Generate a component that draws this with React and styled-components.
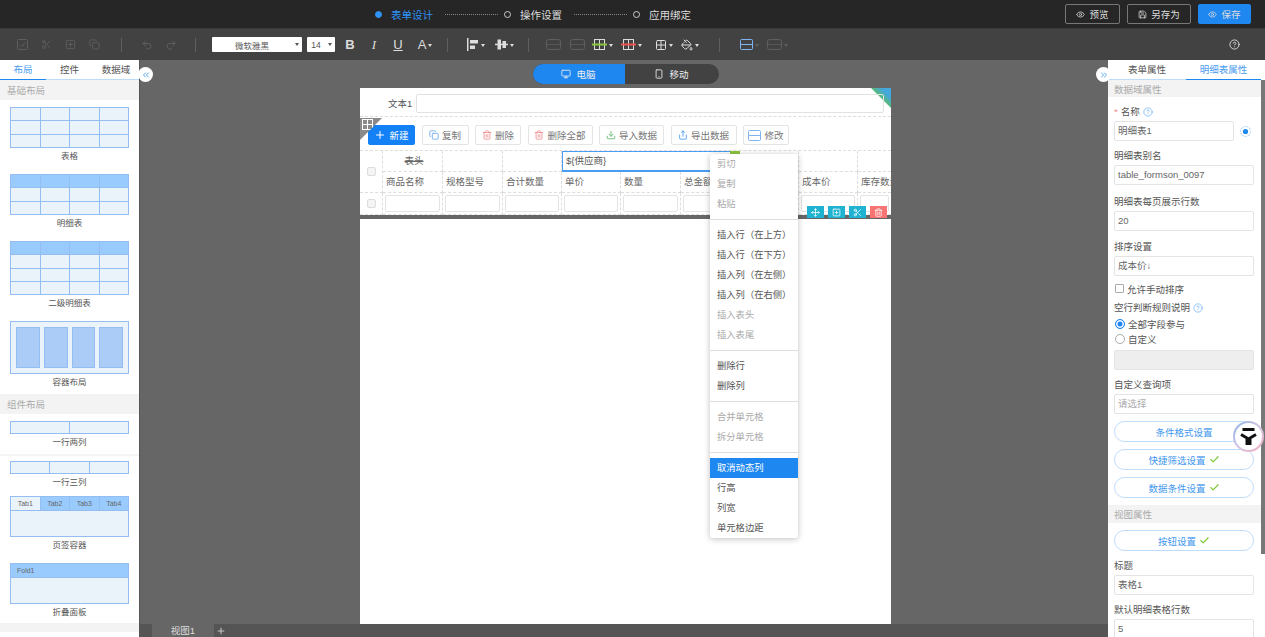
import React from "react"
import styled, { createGlobalStyle } from "styled-components"
import {
  Scissors, Undo2, Redo2, Monitor, Smartphone, CircleHelp, Eye, Save, ChevronsLeft, ChevronsRight,
  Plus, Check, Copy, Trash2, Upload, Share, Move, Grid2x2, PaintBucket, SquarePlus, Download,
} from "lucide-react"

const GlobalStyle = createGlobalStyle`
  html, body { margin: 0; padding: 0; height: 100%; }
  body {
    font-family: "Liberation Sans", "Noto Sans CJK SC", sans-serif;
    font-size: 9.5px;
    color: #555;
    overflow: hidden;
  }
  * { box-sizing: border-box; }
`

const Page = styled.div`
  width: 1265px;
  height: 637px;
  display: flex;
  flex-direction: column;
  position: relative;
  overflow: hidden;
  background: #666;
`

/* top bar */
const TopBar = styled.header`
  height: 29px;
  flex: none;
  background: #262626;
  border-bottom: 1px solid #3a3a3a;
  display: flex;
  align-items: center;
  padding-left: 375px;
`
const StepDot = styled.i`
  width: 7px;
  height: 7px;
  border-radius: 50%;
  flex: none;
  background: ${p => (p.$active ? "#2f93f5" : "transparent")};
  border: 1px solid ${p => (p.$active ? "#2f93f5" : "#ccc")};
`
const StepText = styled.span`
  font-size: 10.5px;
  margin-left: ${p => (p.$active ? "9px" : "9px")};
  color: ${p => (p.$active ? "#2f93f5" : "#ddd")};
  width: 43px;
  white-space: nowrap;
`
const StepLine = styled.i`
  width: 53px;
  margin: 0 6px 0 11px;
  border-top: 1px dotted #888;
`
const TopActions = styled.div`
  margin-left: auto;
  display: flex;
  gap: 7px;
  padding-right: 14px;
`
const TopButton = styled.button`
  height: 20px;
  width: ${p => p.$w}px;
  margin-left: ${p => p.$ml || 0}px;
  border-radius: 2px;
  border: 1px solid ${p => (p.$primary ? "#1e87f0" : "#777")};
  background: ${p => (p.$primary ? "#1e87f0" : "transparent")};
  color: #ddd;
  font: inherit;
  font-size: 9.5px;
  padding: 0;
  display: flex;
  align-items: center;
  justify-content: center;
  gap: 4px;
`

/* toolbar */
const ToolBar = styled.div`
  height: 31px;
  flex: none;
  background: #424242;
  display: flex;
  align-items: center;
  padding-left: 10px;
  color: #ddd;
`
const Tool = styled.span`
  width: ${p => p.$w || 24}px;
  margin-left: ${p => p.$ml || 0}px;
  flex: none;
  display: flex;
  align-items: center;
  justify-content: center;
  gap: 2px;
  color: ${p => (p.$off ? "#5e5e5e" : "#ddd")};
  font-family: ${p => (p.$serif ? '"Liberation Serif", serif' : "inherit")};
  font-size: 13px;
  font-weight: ${p => (p.$bold ? 700 : 400)};
  font-style: ${p => (p.$italic ? "italic" : "normal")};
  text-decoration: ${p => (p.$under ? "underline" : "none")};
`
const Caret = styled.i`
  width: 0;
  height: 0;
  border: 2px solid transparent;
  border-top: 3px solid ${p => (p.$off ? "#5e5e5e" : "#ddd")};
  margin-top: 3px;
`
const ToolDivider = styled.i`
  width: 1px;
  height: 14px;
  flex: none;
  background: #5f5f5f;
  margin: 0 ${p => p.$r}px 0 ${p => p.$l}px;
`
const ToolSelect = styled.div`
  width: ${p => p.$w}px;
  margin-left: ${p => p.$ml || 0}px;
  height: 15px;
  flex: none;
  background: #fff;
  border-radius: 1px;
  color: #555;
  font-size: 8.5px;
  display: flex;
  align-items: center;
  justify-content: center;
  position: relative;
  padding-right: 10px;
  & > i {
    position: absolute;
    right: 3px;
    top: 6px;
    border: 2px solid transparent;
    border-top: 3px solid #555;
  }
`

/* main area */
const Main = styled.div`
  flex: 1;
  min-height: 0;
  display: flex;
`
const SidePanel = styled.aside`
  flex: none;
  width: ${p => p.$w}px;
  background: #fff;
  overflow: hidden;
  display: flex;
  flex-direction: column;
`
const TabRow = styled.div`
  height: 20px;
  flex: none;
  display: flex;
  border-bottom: 1px solid #bcdcfb;
`
const PanelTab = styled.div`
  width: ${p => p.$w}px;
  height: 20px;
  flex: none;
  text-align: center;
  font-size: 9.5px;
  line-height: 19px;
  color: ${p => (p.$on ? "#4a9cf0" : "#555")};
  border-bottom: ${p => (p.$on ? "1px solid #1e87f0" : "0")};
`
const SectionHead = styled.div`
  height: ${p => p.$h || 20}px;
  flex: none;
  background: #f3f3f3;
  color: #aaa;
  font-size: 9.5px;
  padding-left: ${p => p.$pl || 7}px;
  display: flex;
  align-items: center;
  margin-top: ${p => p.$mt || 0}px;
`
const ThumbList = styled.div`
  padding: 7px 10px 0;
  display: flex;
  flex-direction: column;
`
const ThumbItem = styled.div`
  height: ${p => p.$h}px;
  flex: none;
`
const ThumbLabel = styled.div`
  text-align: center;
  font-size: 8.5px;
  line-height: 12px;
  margin-top: 2px;
  color: #555;
`
const ThumbGrid = styled.div`
  height: ${p => p.$h}px;
  display: grid;
  grid-template-columns: repeat(${p => p.$cols}, 1fr);
  border: 1px solid #94bdf2;
  background: #94bdf2;
  gap: 1px;
`
const ThumbCell = styled.div`
  background: ${p => (p.$head ? "#99cbff" : "#eaf2fa")};
  color: #666;
  font-size: 7px;
  padding-left: ${p => p.$pl || 0}px;
  display: flex;
  align-items: center;
  justify-content: ${p => (p.$pl ? "flex-start" : "center")};
  grid-column: ${p => (p.$span ? `span ${p.$span}` : "auto")};
  grid-row: ${p => (p.$tall ? "span 2" : "auto")};
`
const BoxThumb = styled.div`
  height: 53px;
  border: 1px solid #94bdf2;
  background: #eaf2fa;
  padding: 5px 5px;
  display: flex;
  gap: 4px;
  & > i {
    flex: 1;
    background: #aaccf7;
    border: 1px solid #94bdf2;
  }
`
const ThumbRule = styled.div`
  height: 2px;
  margin: 0 -10px;
  background: #f5f5f5;
`

/* center */
const Center = styled.main`
  flex: 1;
  min-width: 0;
  display: flex;
  flex-direction: column;
  position: relative;
  border-left: 1px solid #555;
`
const Stage = styled.div`
  flex: 1;
  min-height: 0;
  padding-top: 4px;
  display: flex;
  flex-direction: column;
  align-items: center;
  margin-left: 3px;
`
const DeviceSwitch = styled.div`
  width: 186px;
  height: 20px;
  flex: none;
  display: flex;
  border-radius: 10px;
  overflow: hidden;
  background: #424242;
`
const DeviceTab = styled.div`
  width: ${p => p.$w}px;
  flex: none;
  background: ${p => (p.$on ? "#1e87f0" : "transparent")};
  color: #eee;
  font-size: 9.5px;
  display: flex;
  align-items: center;
  justify-content: center;
  gap: 5px;
`
const Canvas = styled.div`
  width: 531px;
  flex: 1;
  margin-top: 4px;
  background: #fff;
  position: relative;
  overflow: hidden;
`
const TextRow = styled.div`
  height: 29px;
  display: flex;
  align-items: flex-start;
  padding: 6px 7px 0 28px;
  border-bottom: 1px dashed #ddd;
  position: relative;
`
const FieldName = styled.span`
  width: 28px;
  line-height: 19px;
  flex: none;
`
const TextBox = styled.div`
  flex: 1;
  height: 19px;
  border: 1px solid #e2e2e2;
  border-radius: 2px;
`
const ColorCorner = styled.div`
  position: absolute;
  right: 0;
  top: 0;
  width: 20px;
  height: 20px;
  clip-path: polygon(0 0, 100% 0, 100% 100%);
  background: linear-gradient(45deg, #c9d53f 15%, #5dbb63 45%, #45a8dc 75%);
`
const TableCorner = styled.div`
  position: absolute;
  left: 0;
  top: 30px;
  width: 22px;
  height: 22px;
  background: #8a8a8a;
  clip-path: polygon(0 0, 100% 0, 0 100%);
  color: #fff;
  z-index: 2;
`
const ActionRow = styled.div`
  height: 33px;
  display: flex;
  align-items: center;
  padding: 3px 0 0 8px;
  gap: 6.5px;
`
const ActionButton = styled.div`
  width: ${p => p.$w}px;
  height: 20px;
  flex: none;
  border-radius: 2px;
  border: 1px solid ${p => (p.$primary ? "#1480f5" : "#e4e4e4")};
  background: ${p => (p.$primary ? "#1480f5" : "#fff")};
  color: ${p => (p.$primary ? "#fff" : "#777")};
  font-size: 9.5px;
  display: flex;
  align-items: center;
  justify-content: center;
  gap: 3px;
`
const TableGrid = styled.div`
  display: grid;
  grid-template-columns: 23px 60px 60px 59px 59px 60px 59px 59px 59px 33px;
  grid-template-rows: 21px 21px 22px;
  border-top: 1px dashed #ddd;
  overflow: hidden;
`
const Cell = styled.div`
  border-right: ${p => (p.$plain ? "0" : "1px dashed #ddd")};
  border-bottom: 1px dashed #ddd;
  font-size: 9.5px;
  color: #666;
  white-space: nowrap;
  overflow: hidden;
  padding-left: 3px;
  line-height: 20px;
  text-align: ${p => (p.$center ? "center" : "left")};
  text-decoration: ${p => (p.$strike ? "line-through" : "none")};
`
const CheckCell = styled(Cell)`
  display: flex;
  align-items: center;
  justify-content: center;
  padding: 0;
  grid-row: ${p => (p.$tall ? "span 2" : "auto")};
`
const SmallBox = styled.i`
  width: 9px;
  height: 9px;
  border: 1px solid #ddd;
  border-radius: 2px;
  background: #f4f4f4;
`
const SelectedCell = styled.div`
  grid-column: span 3;
  border: 1px solid #4a9df0;
  border-width: 1px 1px 2px 1px;
  font-size: 9.5px;
  color: #555;
  line-height: 18px;
  padding-left: 3px;
  position: relative;
  &::after {
    content: "";
    position: absolute;
    right: -1px;
    top: -1px;
    width: 10px;
    height: 5px;
    background: #8cc63f;
  }
`
const InputCell = styled(Cell)`
  padding: 2px;
`
const InputBox = styled.div`
  height: 100%;
  border: 1px solid #e4e4e4;
  border-radius: 2px;
`
const TableEnd = styled.div`
  height: 4px;
  background: #666;
`
const CellTools = styled.div`
  position: absolute;
  left: 447px;
  top: 118px;
  display: flex;
  gap: 4px;
`
const CellTool = styled.span`
  width: 17px;
  height: 12px;
  background: ${p => (p.$danger ? "#f77474" : "#1fb3d1")};
  color: #fff;
  display: flex;
  align-items: center;
  justify-content: center;
`
const TabBar = styled.div`
  height: 13px;
  flex: none;
  background: #555;
  display: flex;
  padding-left: 12px;
  margin-top: 0;
  color: #ddd;
  font-size: 9.5px;
  line-height: 13px;
  position: relative;
`
const ViewTab = styled.div`
  width: 62px;
  text-align: center;
  background: #666;
`
const AddTab = styled.div`
  width: 14px;
  display: flex;
  align-items: center;
  justify-content: center;
`

/* context menu */
const Menu = styled.ul`
  position: absolute;
  left: 710px;
  top: 154px;
  width: 88px;
  margin: 0;
  padding: 0;
  list-style: none;
  background: #fff;
  border-radius: 3px;
  box-shadow: 0 1px 6px rgba(0, 0, 0, 0.25);
  z-index: 5;
`
const MenuItem = styled.li`
  height: 20px;
  line-height: 20px;
  padding-left: 7px;
  font-size: 9.3px;
  white-space: nowrap;
  color: ${p => (p.$on ? "#fff" : p.$off ? "#aaa" : "#555")};
  background: ${p => (p.$on ? "#1e87f0" : "transparent")};
`
const MenuRule = styled.li`
  height: 1px;
  background: #ddd;
  margin: ${p => p.$m || "5px 0"};
`

/* property panel */
const PropPanel = styled.div`
  flex: 1;
  min-height: 0;
  overflow: hidden;
  padding: 0;
  width: 153px;
`
const PropBody = styled.div`
  padding: 0 7px 0 6px;
`
const PropLabel = styled.div`
  font-size: 9.5px;
  color: #555;
  height: 12px;
  line-height: 12px;
  margin-top: ${p => p.$mt}px;
  margin-bottom: ${p => p.$mb || 3}px;
  display: flex;
  align-items: center;
  gap: 3px;
  & > b {
    color: #f08a8a;
    font-weight: 400;
  }
`
const PropInput = styled.div`
  height: 20px;
  width: ${p => (p.$w ? `${p.$w}px` : "100%")};
  border: 1px solid #e4e4e4;
  border-radius: 2px;
  background: ${p => (p.$off ? "#eee" : "#fff")};
  color: ${p => (p.$ghost ? "#aaa" : "#666")};
  padding-left: 3px;
  font-size: 9.5px;
  line-height: 18px;
  position: relative;
`
const InputLine = styled.div`
  display: flex;
  align-items: center;
  gap: 6px;
`
const OptionRow = styled.div`
  display: flex;
  align-items: center;
  gap: 3px;
  height: 15px;
  margin-top: ${p => p.$mt || 0}px;
  font-size: 9.5px;
  color: #555;
`
const Square = styled.i`
  width: 9px;
  height: 9px;
  margin-left: 1px;
  border: 1px solid #aaa;
  border-radius: 1px;
`
const Radio = styled.i`
  width: 10px;
  height: 10px;
  margin-left: 1px;
  border-radius: 50%;
  border: 1px solid ${p => (p.$on ? "#1e87f0" : "#aaa")};
  box-shadow: ${p => (p.$on ? "inset 0 0 0 1.5px #fff" : "none")};
  background: ${p => (p.$on ? "#1e87f0" : "#fff")};
`
const PillButton = styled.div`
  height: 21px;
  margin-top: ${p => p.$mt || 7}px;
  border: 1px solid #bcdcfb;
  border-radius: 11px;
  color: #3f97ee;
  font-size: 9.5px;
  display: flex;
  align-items: center;
  justify-content: center;
  gap: 3px;
`
const ScrollThumb = styled.i`
  position: absolute;
  right: 0;
  top: 80px;
  width: 4px;
  height: 474px;
  background: #777;
`
const Collapse = styled.div`
  position: absolute;
  top: 67px;
  left: ${p => p.$x}px;
  width: 15px;
  height: 15px;
  border-radius: 50%;
  background: #fff;
  color: #3f97ee;
  display: flex;
  align-items: center;
  justify-content: center;
  z-index: 4;
`
const Assistant = styled.div`
  position: absolute;
  left: 1233px;
  top: 421px;
  width: 31px;
  height: 31px;
  border-radius: 50%;
  padding: 2px;
  background: linear-gradient(135deg, #8ab4e8, #d9c6e0 55%, #f0a9bd);
  z-index: 6;
  & > div {
    width: 100%;
    height: 100%;
    border-radius: 50%;
    background: #fff;
    display: flex;
    align-items: center;
    justify-content: center;
  }
`

const TableIcon = ({ bar }) => (
  <svg width="15" height="13" viewBox="0 0 15 13" fill="none" stroke="currentColor">
    <rect x="2.5" y="1.5" width="10" height="10" />
    <path d="M2.5 6.5h10M7.5 1.5v10" />
    {bar && <path d="M0 6.5h15" stroke={bar} strokeWidth="2" />}
  </svg>
)
const AlignIcon = () => (
  <svg width="12" height="13" viewBox="0 0 12 13" fill="currentColor">
    <rect x="0" y="0" width="1.5" height="13" />
    <rect x="3" y="2" width="8" height="3.5" />
    <rect x="3" y="7.5" width="5" height="3.5" />
  </svg>
)
const MiddleIcon = () => (
  <svg width="13" height="13" viewBox="0 0 13 13" fill="currentColor">
    <rect x="0" y="5.7" width="13" height="1.5" />
    <rect x="2.5" y="1.5" width="3.5" height="10" />
    <rect x="7.5" y="3" width="3.5" height="7" />
  </svg>
)
const MergeIcon = () => (
  <svg width="15" height="11" viewBox="0 0 15 11" fill="none" stroke="currentColor">
    <rect x="0.5" y="0.5" width="14" height="10" rx="2" />
    <path d="M0.5 5.5h14" strokeDasharray="2 1" />
  </svg>
)
const CheckBoxIcon = () => (
  <svg width="11" height="11" viewBox="0 0 11 11" fill="none" stroke="currentColor">
    <rect x="0.5" y="0.5" width="10" height="10" rx="1" />
    <path d="M3 5.5l2 2 3-4" />
  </svg>
)
const RowSplitIcon = () => (
  <svg width="13" height="11" viewBox="0 0 13 11" fill="none" stroke="#7fb4f0">
    <rect x="0.5" y="0.5" width="12" height="10" rx="1" />
    <path d="M0.5 5.5h12" />
  </svg>
)
const TargetIcon = () => (
  <svg width="11" height="11" viewBox="0 0 11 11">
    <circle cx="5.5" cy="5.5" r="5" fill="none" stroke="#a8cdf5" strokeDasharray="2 1" />
    <circle cx="5.5" cy="5.5" r="2.6" fill="#1e87f0" />
  </svg>
)
const HintIcon = () => <CircleHelp size={10} color="#5aa5f0" strokeWidth={1.5} />
const DoneIcon = () => <Check size={11} color="#7cc832" strokeWidth={2.5} />
const AssistantLogo = () => (
  <svg width="21" height="21" viewBox="0 0 21 21" fill="none" stroke="#111" strokeWidth="3">
    <path d="M4.5 3.5h12M3 8.5l6 3.5v7M18 8.5l-6 3.5v7" />
  </svg>
)

const thumbRows = (head, rows) => [
  ...Array.from({ length: head }, () => Array(4).fill(true)),
  ...Array.from({ length: rows }, () => Array(4).fill(false)),
]

const TableThumb = ({ head, rows, h }) => (
  <ThumbGrid $cols={4} $h={h}>
    {thumbRows(head, rows).flat().map((isHead, i) => (
      <ThumbCell key={i} $head={isHead} />
    ))}
  </ThumbGrid>
)

const LeftPanel = () => (
  <SidePanel $w={139}>
    <TabRow>
      <PanelTab $w={46} $on>布局</PanelTab>
      <PanelTab $w={47}>控件</PanelTab>
      <PanelTab $w={46}>数据域</PanelTab>
    </TabRow>
    <SectionHead>基础布局</SectionHead>
    <ThumbList>
      <ThumbItem $h={67}>
        <TableThumb head={0} rows={3} h={41} />
        <ThumbLabel>表格</ThumbLabel>
      </ThumbItem>
      <ThumbItem $h={67}>
        <TableThumb head={1} rows={2} h={41} />
        <ThumbLabel>明细表</ThumbLabel>
      </ThumbItem>
      <ThumbItem $h={80}>
        <TableThumb head={1} rows={3} h={54} />
        <ThumbLabel>二级明细表</ThumbLabel>
      </ThumbItem>
      <ThumbItem $h={73}>
        <BoxThumb><i /><i /><i /><i /></BoxThumb>
        <ThumbLabel>容器布局</ThumbLabel>
      </ThumbItem>
    </ThumbList>
    <SectionHead>组件布局</SectionHead>
    <ThumbList>
      <ThumbItem $h={33}>
        <ThumbGrid $cols={2} $h={13}><ThumbCell /><ThumbCell /></ThumbGrid>
        <ThumbLabel>一行两列</ThumbLabel>
      </ThumbItem>
      <ThumbRule />
      <ThumbItem $h={40}>
        <div style={{ height: 5 }} />
        <ThumbGrid $cols={3} $h={13}><ThumbCell /><ThumbCell /><ThumbCell /></ThumbGrid>
        <ThumbLabel>一行三列</ThumbLabel>
      </ThumbItem>
      <ThumbItem $h={67}>
        <ThumbTabs />
        <ThumbLabel>页签容器</ThumbLabel>
      </ThumbItem>
      <ThumbItem $h={60}>
        <ThumbFold />
        <ThumbLabel>折叠面板</ThumbLabel>
      </ThumbItem>
    </ThumbList>
    <SectionHead $h={9} />
  </SidePanel>
)

const FoldGrid = styled(ThumbGrid)`
  grid-template-columns: 1fr;
  grid-template-rows: 13px 1fr;
`
const TabsGrid = styled(ThumbGrid)`
  grid-template-rows: 13px 1fr;
`
const ThumbTabs = () => (
  <TabsGrid $cols={4} $h={41}>
    <ThumbCell>Tab1</ThumbCell>
    <ThumbCell $head>Tab2</ThumbCell>
    <ThumbCell $head>Tab3</ThumbCell>
    <ThumbCell $head>Tab4</ThumbCell>
    <ThumbCell $span={4} />
  </TabsGrid>
)
const ThumbFold = () => (
  <FoldGrid $cols={1} $h={41}>
    <ThumbCell $head $pl={6}>Fold1</ThumbCell>
    <ThumbCell />
  </FoldGrid>
)

const actions = [
  { label: "复制", w: 47, icon: <Copy size={10} color="#6aa7ee" /> },
  { label: "删除", w: 46, icon: <Trash2 size={10} color="#ef8d8d" /> },
  { label: "删除全部", w: 65, icon: <Trash2 size={10} color="#ef8d8d" /> },
  { label: "导入数据", w: 65, icon: <Download size={10} color="#5db66a" /> },
  { label: "导出数据", w: 66, icon: <Share size={10} color="#3f97ee" /> },
  { label: "修改", w: 46, icon: <RowSplitIcon /> },
]
const columns = ["商品名称", "规格型号", "合计数量", "单价", "数量", "总金额", "", "成本价", "库存数量"]

const DesignCanvas = () => (
  <Canvas>
    <ColorCorner />
    <TextRow>
      <FieldName>文本1</FieldName>
      <TextBox />
    </TextRow>
    <TableCorner><TableIcon /></TableCorner>
    <ActionRow>
      <ActionButton $primary $w={47}><Plus size={12} />新建</ActionButton>
      {actions.map(a => (
        <ActionButton key={a.label} $w={a.w}>{a.icon}{a.label}</ActionButton>
      ))}
    </ActionRow>
    <TableGrid>
      <CheckCell $tall><SmallBox /></CheckCell>
      <Cell $center $strike>表头</Cell>
      <Cell />
      <Cell />
      <SelectedCell>{"${供应商}"}</SelectedCell>
      <Cell />
      <Cell />
      <Cell $plain />
      {columns.map((c, i) => <Cell key={i} $plain={i === 8}>{c}</Cell>)}
      <CheckCell><SmallBox /></CheckCell>
      {columns.map((c, i) => <InputCell key={i} $plain={i === 8}><InputBox /></InputCell>)}
    </TableGrid>
    <TableEnd />
    <CellTools>
      <CellTool><Move size={9} /></CellTool>
      <CellTool><SquarePlus size={9} /></CellTool>
      <CellTool><Scissors size={9} /></CellTool>
      <CellTool $danger><Trash2 size={9} /></CellTool>
    </CellTools>
  </Canvas>
)

const ContextMenu = () => (
  <Menu>
    <MenuItem $off>剪切</MenuItem>
    <MenuItem $off>复制</MenuItem>
    <MenuItem $off>粘贴</MenuItem>
    <MenuRule />
    <MenuItem>插入行（在上方）</MenuItem>
    <MenuItem>插入行（在下方）</MenuItem>
    <MenuItem>插入列（在左侧）</MenuItem>
    <MenuItem>插入列（在右侧）</MenuItem>
    <MenuItem $off>插入表头</MenuItem>
    <MenuItem $off>插入表尾</MenuItem>
    <MenuRule />
    <MenuItem>删除行</MenuItem>
    <MenuItem>删除列</MenuItem>
    <MenuRule />
    <MenuItem $off>合并单元格</MenuItem>
    <MenuItem $off>拆分单元格</MenuItem>
    <MenuRule />
    <MenuItem $on>取消动态列</MenuItem>
    <MenuItem>行高</MenuItem>
    <MenuItem>列宽</MenuItem>
    <MenuItem>单元格边距</MenuItem>
  </Menu>
)

const RightPanel = () => (
  <SidePanel $w={157}>
    <PropPanel>
      <TabRow>
        <PanelTab $w={78}>表单属性</PanelTab>
        <PanelTab $w={75} $on>明细表属性</PanelTab>
      </TabRow>
      <SectionHead $h={17} $pl={6}>数据域属性</SectionHead>
      <PropBody>
        <PropLabel $mt={9}><b>*</b>名称<HintIcon /></PropLabel>
        <InputLine>
          <PropInput $w={120}>明细表1</PropInput>
          <TargetIcon />
        </InputLine>
        <PropLabel $mt={9}>明细表别名</PropLabel>
        <PropInput>table_formson_0097</PropInput>
        <PropLabel $mt={11}>明细表每页展示行数</PropLabel>
        <PropInput>20</PropInput>
        <PropLabel $mt={10}>排序设置</PropLabel>
        <PropInput>成本价↓</PropInput>
        <OptionRow $mt={5}><Square />允许手动排序</OptionRow>
        <PropLabel $mt={6} $mb={2}>空行判断规则说明<HintIcon /></PropLabel>
        <OptionRow><Radio $on />全部字段参与</OptionRow>
        <OptionRow><Radio />自定义</OptionRow>
        <div style={{ height: 4 }} />
        <PropInput $off />
        <PropLabel $mt={9}>自定义查询项</PropLabel>
        <PropInput $ghost>请选择</PropInput>
        <PillButton>条件格式设置</PillButton>
        <PillButton>快捷筛选设置<DoneIcon /></PillButton>
        <PillButton>数据条件设置<DoneIcon /></PillButton>
      </PropBody>
      <SectionHead $h={18} $pl={6} $mt={7}>视图属性</SectionHead>
      <PropBody>
        <PillButton>按钮设置<DoneIcon /></PillButton>
        <PropLabel $mt={9}>标题</PropLabel>
        <PropInput>表格1</PropInput>
        <PropLabel $mt={9}>默认明细表格行数</PropLabel>
        <PropInput>5</PropInput>
      </PropBody>
    </PropPanel>
    <ScrollThumb />
  </SidePanel>
)

const App = () => (
  <Page>
    <GlobalStyle />
    <TopBar>
      <StepDot $active />
      <StepText $active>表单设计</StepText>
      <StepLine />
      <StepDot />
      <StepText>操作设置</StepText>
      <StepLine />
      <StepDot />
      <StepText>应用绑定</StepText>
      <TopActions>
        <TopButton $w={55}><Eye size={9} />预览</TopButton>
        <TopButton $w={64}><Save size={9} />另存为</TopButton>
        <TopButton $w={53} $primary><Eye size={9} />保存</TopButton>
      </TopActions>
    </TopBar>
    <ToolBar>
      <Tool $off><CheckBoxIcon /></Tool>
      <Tool $off><Scissors size={11} /></Tool>
      <Tool $off><SquarePlus size={11} /></Tool>
      <Tool $off><Copy size={11} /></Tool>
      <ToolDivider $l={15} $r={13} />
      <Tool $off><Undo2 size={12} /></Tool>
      <Tool $off><Redo2 size={12} /></Tool>
      <ToolDivider $l={12} $r={16} />
      <ToolSelect $w={90}>微软雅黑<i /></ToolSelect>
      <ToolSelect $w={28} $ml={5}>14<i /></ToolSelect>
      <Tool $ml={3} $bold>B</Tool>
      <Tool $serif $italic>I</Tool>
      <Tool $under>U</Tool>
      <Tool $w={32} $ml={-1}>A<Caret /></Tool>
      <ToolDivider $l={6} $r={14} />
      <Tool $w={28}><AlignIcon /><Caret /></Tool>
      <Tool $w={28}><MiddleIcon /><Caret /></Tool>
      <ToolDivider $l={10} $r={12} />
      <Tool $off><MergeIcon /></Tool>
      <Tool $off><MergeIcon /></Tool>
      <Tool $w={26}><TableIcon bar="#8cc63f" /><Caret /></Tool>
      <Tool $w={28} $ml={2}><TableIcon bar="#ef5350" /><Caret /></Tool>
      <Tool $w={26} $ml={6}><Grid2x2 size={12} /><Caret /></Tool>
      <Tool $w={26}><PaintBucket size={12} /><Caret /></Tool>
      <ToolDivider $l={16} $r={15} />
      <Tool $w={28} $off><RowSplitIcon /><Caret $off /></Tool>
      <Tool $w={28} $off><MergeIcon /><Caret $off /></Tool>
      <Tool $ml={431}><CircleHelp size={11} /></Tool>
    </ToolBar>
    <Main>
      <LeftPanel />
      <Center>
        <Stage>
          <DeviceSwitch>
            <DeviceTab $on $w={92}><Monitor size={10} />电脑</DeviceTab>
            <DeviceTab $w={94}><Smartphone size={10} />移动</DeviceTab>
          </DeviceSwitch>
          <DesignCanvas />
        </Stage>
        <TabBar>
          <ViewTab>视图1</ViewTab>
          <AddTab><Plus size={10} /></AddTab>
        </TabBar>
      </Center>
      <RightPanel />
    </Main>
    <Collapse $x={138}><ChevronsLeft size={10} /></Collapse>
    <Collapse $x={1096}><ChevronsRight size={10} /></Collapse>
    <ContextMenu />
    <Assistant><div><AssistantLogo /></div></Assistant>
  </Page>
)

export default App
